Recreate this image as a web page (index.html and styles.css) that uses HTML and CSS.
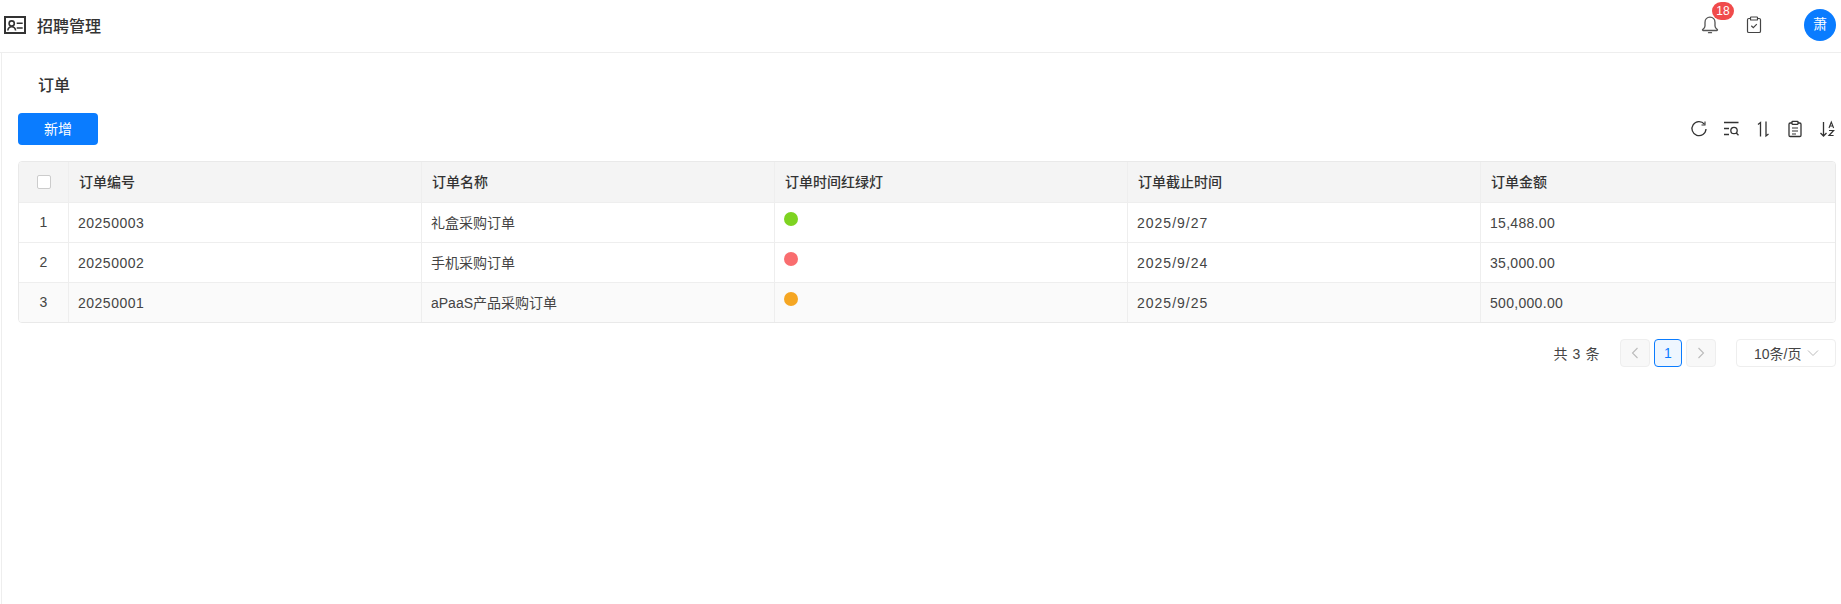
FILE: index.html
```html
<!DOCTYPE html>
<html lang="zh">
<head>
<meta charset="utf-8">
<title>招聘管理</title>
<link rel="stylesheet" href="styles.css">
</head>
<body>
<header class="topbar">
  <div class="brand">
    <svg class="brand-icon" width="22" height="18" viewBox="0 0 22 18" fill="none" stroke="#333" stroke-width="2"><rect x="1" y="1" width="20" height="16"/><circle cx="7.700" cy="7.500" r="2.600" stroke-width="1.600"/><path d="M3.800 14.500c.3-2.500 1.800-3.800 3.900-3.800s3.600 1.300 3.900 3.800" stroke-width="1.600"/><path d="M12.700 7.300h6M12.700 12h6" stroke-width="1.600"/></svg>
    <span class="brand-name">招聘管理</span>
  </div>
  <div class="top-actions">
    <div class="bell">
      <svg width="20" height="20" viewBox="0 0 20 20" fill="none" stroke="#555" stroke-width="1.300"><path d="M10 2.200c-3 0-5 2.300-5 5.200v3.600c0 1.600-1 2.600-2.300 3.600-.4.300-.2.900.3.900h14c.5 0 .7-.6.3-.9-1.300-1-2.300-2-2.300-3.600V7.400c0-2.900-2-5.200-5-5.200Z"/><path d="M8.500 17.700h3" stroke-linecap="round"/></svg>
      <span class="badge">18</span>
    </div>
    <svg class="clip" width="16" height="18" viewBox="0 0 16 18" fill="none" stroke="#444" stroke-width="1.200"><path d="M4.500 2.500H2.800c-.8 0-1.300.5-1.300 1.300v11.400c0 .8.500 1.300 1.300 1.300h10.400c.8 0 1.300-.5 1.300-1.300V3.800c0-.8-.5-1.300-1.300-1.300h-1.700"/><rect x="4.500" y="1" width="7" height="3" rx=".6"/><path d="m5.300 9.800 2 1.900 3.500-3.500"/></svg>
    <div class="avatar">萧</div>
  </div>
</header>
<main class="content">
  <h1 class="title">订单</h1>
  <div class="toolbar">
    <button class="btn-primary">新增</button>
    <div class="tools">
      <svg width="18" height="18" viewBox="0 0 18 18" fill="none" stroke="#333" stroke-width="1.300"><path d="M14.400 4.200A7 7 0 1 0 16 9"/><path d="M15 1.500v3.500h-3.500" stroke-width="1.100"/></svg>
      <svg width="18" height="18" viewBox="0 0 18 18" fill="none" stroke="#333" stroke-width="1.300"><path d="M2 2.500h14.500M2 8.500h5M2 14.500h5"/><circle cx="12" cy="10.500" r="3.200"/><path d="m14.300 13 2.200 2.200"/></svg>
      <svg width="18" height="18" viewBox="0 0 18 18" fill="none" stroke="#333" stroke-width="1.300"><path d="M6.500 16.500V2.500L4 4.500"/><path d="M12 1.500v14.500l2.500-2"/></svg>
      <svg width="18" height="18" viewBox="0 0 18 18" fill="none" stroke="#333" stroke-width="1.300"><rect x="3" y="3" width="12" height="13.500" rx="1.200"/><rect x="6" y="1.300" width="6" height="3" rx=".5" fill="#fff"/><path d="M6 8h6M6 11h6M6 14h4" stroke-width="1.100"/></svg>
      <svg width="18" height="18" viewBox="0 0 18 18" fill="none" stroke="#333" stroke-width="1.300"><path d="M5.500 2v14M2.500 13l3 3 3-3"/><path d="m11 8 2.300-6 2.300 6M11.800 6h3" stroke-width="1.100"/><path d="M11 10.500h4.600l-4.600 5h4.600" stroke-width="1.200"/></svg>
    </div>
  </div>
  <div class="table">
    <div class="row head">
      <div class="cell idx"><span class="check"></span></div>
      <div class="cell">订单编号</div>
      <div class="cell">订单名称</div>
      <div class="cell">订单时间红绿灯</div>
      <div class="cell">订单截止时间</div>
      <div class="cell">订单金额</div>
    </div>
    <div class="row">
      <div class="cell idx">1</div>
      <div class="cell num">20250003</div>
      <div class="cell">礼盒采购订单</div>
      <div class="cell lamp-cell"><span class="lamp green"></span></div>
      <div class="cell num date">2025/9/27</div>
      <div class="cell num money">15,488.00</div>
    </div>
    <div class="row">
      <div class="cell idx">2</div>
      <div class="cell num">20250002</div>
      <div class="cell">手机采购订单</div>
      <div class="cell lamp-cell"><span class="lamp red"></span></div>
      <div class="cell num date">2025/9/24</div>
      <div class="cell num money">35,000.00</div>
    </div>
    <div class="row alt">
      <div class="cell idx">3</div>
      <div class="cell num">20250001</div>
      <div class="cell">aPaaS产品采购订单</div>
      <div class="cell lamp-cell"><span class="lamp orange"></span></div>
      <div class="cell num date">2025/9/25</div>
      <div class="cell num money">500,000.00</div>
    </div>
  </div>
  <div class="pager">
    <span class="total">共 3 条</span>
    <div class="pages">
      <span class="page arrow"><svg width="10" height="12" viewBox="0 0 10 12" fill="none" stroke="#bbb" stroke-width="1.100"><path d="M7.500 1 2.500 6l5 5"/></svg></span>
      <span class="page current">1</span>
      <span class="page arrow"><svg width="10" height="12" viewBox="0 0 10 12" fill="none" stroke="#bbb" stroke-width="1.100"><path d="m2.500 1 5 5-5 5"/></svg></span>
    </div>
    <div class="size">10条/页<svg width="12" height="8" viewBox="0 0 12 8" fill="none" stroke="#bbb" stroke-width="1"><path d="m1 1.500 5 5 5-5"/></svg></div>
  </div>
</main>
</body>
</html>
```
FILE: styles.css
```css
* { box-sizing: border-box; }
html, body { margin: 0; height: 100%; }
body {
  background: #fff;
  color: #333;
  font-family: "Liberation Sans", "Noto Sans CJK SC", sans-serif;
  font-size: 14px;
  overflow: hidden;
}
.topbar {
  height: 53px;
  display: flex;
  align-items: center;
  justify-content: space-between;
  padding: 0 5px 2px 4px;
  border-bottom: 1px solid #eee;
}
.brand { display: flex; align-items: center; gap: 11px; }
.brand-icon { display: block; }
.brand-name { font-size: 16px; color: #333; font-weight: 500; }
.top-actions { display: flex; align-items: center; }
.bell { position: relative; width: 20px; height: 20px; margin-right: 26px; }
.bell svg { display: block; }
.badge {
  position: absolute;
  left: 12px;
  top: -13px;
  width: 22px;
  height: 18px;
  border-radius: 9px;
  background: #f04b4b;
  color: #fff;
  font-size: 12px;
  line-height: 18px;
  text-align: center;
}
.clip { display: block; margin-right: 42px; }
.avatar {
  width: 32px;
  height: 32px;
  border-radius: 50%;
  background: #0a7cff;
  color: #fff;
  font-size: 14px;
  line-height: 31px;
  text-align: center;
}
.content {
  height: 551px;
  margin-left: 1px;
  border-left: 1px solid #eee;
  padding: 0 5px 0 16px;
}
.title {
  margin: 0;
  padding: 21px 0 0 20px;
  height: 60px;
  font-size: 16px;
  line-height: 24px;
  font-weight: 500;
  color: #333;
}
.toolbar {
  display: flex;
  align-items: center;
  justify-content: space-between;
  height: 32px;
  margin-bottom: 16px;
}
.btn-primary {
  width: 80px;
  height: 32px;
  padding: 0 0 2px;
  border: 0;
  border-radius: 4px;
  background: #0a7cff;
  color: #fff;
  font: inherit;
}
.tools { display: flex; gap: 14px; }
.tools svg { display: block; }
.table {
  border: 1px solid #e9e9e9;
  border-radius: 4px;
  overflow: hidden;
}
.row {
  display: grid;
  grid-template-columns: 49px 353px 353px 353px 353px 1fr;
  height: 40px;
  border-top: 1px solid #eee;
  color: #444;
}
.row.head { border-top: 0; background: #f4f4f4; color: #333; font-weight: 500; }
.row.alt { background: #fafafa; }
.cell {
  display: flex;
  align-items: center;
  padding: 0 0 2px 9px;
  border-left: 1px solid #eee;
  min-width: 0;
}
.cell.num { letter-spacing: .5px; padding-bottom: 0; }
.cell.date { letter-spacing: 1px; }
.cell.money { letter-spacing: .3px; }
.head .cell { padding-left: 10px; }
.cell.idx { justify-content: center; padding-left: 0; border-left: 0; }
.head .cell.idx { padding-left: 0; padding-bottom: 0; }
.cell.lamp-cell { align-items: flex-start; padding-top: 9px; }
.check {
  width: 14px;
  height: 14px;
  border: 1px solid #ccc;
  border-radius: 2px;
  background: #fff;
}
.lamp { width: 14px; height: 14px; border-radius: 50%; }
.green { background: #7ed321; }
.red { background: #f96d6f; }
.orange { background: #f5a623; }
.pager {
  display: flex;
  justify-content: flex-end;
  align-items: center;
  margin-top: 16px;
  height: 28px;
}
.total { letter-spacing: .6px; margin-right: 20px; color: #444; }
.pages { display: flex; gap: 4px; margin-right: 20px; }
.page {
  width: 28px;
  height: 28px;
  display: flex;
  align-items: center;
  justify-content: center;
  border: 1px solid #eee;
  border-radius: 4px;
  background: #f8f8f8;
}
.page.arrow { width: 30px; }
.page.current { border-color: #0a7cff; background: #eef6ff; color: #0a7cff; }
.size {
  width: 100px;
  height: 28px;
  display: flex;
  align-items: center;
  justify-content: space-between;
  padding: 0 16px 0 17px;
  border: 1px solid #eee;
  border-radius: 4px;
  color: #444;
}
```
